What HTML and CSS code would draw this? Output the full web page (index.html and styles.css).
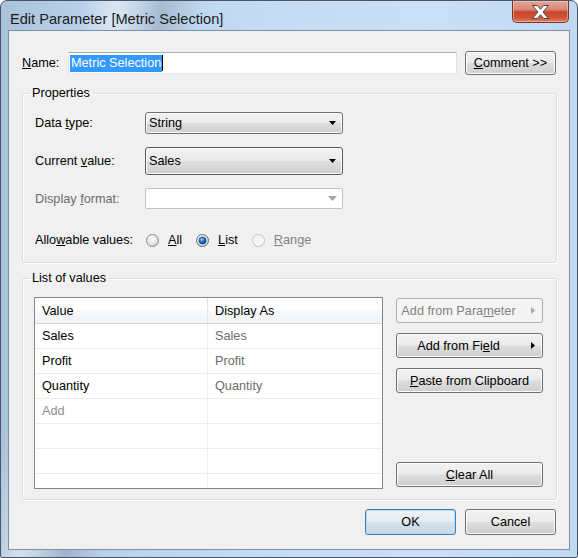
FILE: index.html
```html
<!DOCTYPE html>
<html>
<head>
<meta charset="utf-8">
<title>Edit Parameter</title>
<link rel="stylesheet" href="styles.css">
</head>
<body>
<div class="window">
  <div class="titlebar">
    <span class="title">Edit Parameter [Metric Selection]</span>
    <div class="close">
      <svg width="19" height="14" viewBox="0 0 19 14"><polygon points="1.5,0.5 6.3,0.5 9.5,4.2 12.7,0.5 17.5,0.5 12,7 17.5,13.5 12.7,13.5 9.5,9.8 6.3,13.5 1.5,13.5 7,7" fill="#ffffff" stroke="#454545" stroke-width="1" stroke-linejoin="round"/></svg>
    </div>
  </div>
  <div class="client">
    <div class="name-row">
      <span class="name-lbl"><u>N</u>ame:</span>
      <div class="textbox"><span class="sel">Metric Selection</span><span class="caret"></span></div>
      <div class="btn comment"><u>C</u>omment &gt;&gt;</div>
    </div>

    <fieldset class="group props">
      <legend>Properties</legend>
      <div class="prop-grid">
        <span class="plbl">Data <u>t</u>ype:</span>
        <div class="combo"><span>String</span><svg class="dd" width="7" height="4" viewBox="0 0 7 4"><polygon points="0,0 7,0 3.5,4" fill="#000"/></svg></div>

        <span class="plbl">Current <u>v</u>alue:</span>
        <div class="combo focus"><span>Sales</span><svg class="dd" width="7" height="4" viewBox="0 0 7 4"><polygon points="0,0 7,0 3.5,4" fill="#000"/></svg></div>

        <span class="plbl disabled">Display <u>f</u>ormat:</span>
        <div class="combo edit"><span></span><svg class="dd" width="9" height="5" viewBox="0 0 9 5"><polygon points="0,0 9,0 4.5,5" fill="#a3a3a3"/></svg></div>

        <span class="plbl bottom">Allo<u>w</u>able values:</span>
        <div class="radios bottom">
          <span class="ritem">
            <svg class="radio" width="13" height="13" viewBox="0 0 13 13">
              <defs>
                <radialGradient id="rg1" cx="45%" cy="40%" r="60%"><stop offset="0" stop-color="#fbfbfb"/><stop offset="0.6" stop-color="#e8e8e8"/><stop offset="1" stop-color="#c9c9c9"/></radialGradient>
              </defs>
              <circle cx="6.5" cy="6.5" r="6" fill="url(#rg1)" stroke="#8f8f8f" stroke-width="1"/>
            </svg>
            <span><u>A</u>ll</span>
          </span>
          <span class="ritem">
            <svg class="radio" width="13" height="13" viewBox="0 0 13 13">
              <defs>
                <radialGradient id="rg2" cx="45%" cy="40%" r="60%"><stop offset="0" stop-color="#fbfbfb"/><stop offset="0.6" stop-color="#e8e8e8"/><stop offset="1" stop-color="#c9c9c9"/></radialGradient>
                <radialGradient id="rd" cx="40%" cy="35%" r="65%"><stop offset="0" stop-color="#9fd3ff"/><stop offset="0.45" stop-color="#2a7fd6"/><stop offset="1" stop-color="#0b3a78"/></radialGradient>
              </defs>
              <circle cx="6.5" cy="6.5" r="6" fill="url(#rg2)" stroke="#5c6f86" stroke-width="1"/>
              <circle cx="6.5" cy="6.5" r="3.6" fill="url(#rd)" stroke="#123a66" stroke-width="0.6"/>
            </svg>
            <span><u>L</u>ist</span>
          </span>
          <span class="ritem disabled">
            <svg class="radio" width="13" height="13" viewBox="0 0 13 13">
              <circle cx="6.5" cy="6.5" r="6" fill="#f4f4f4" stroke="#c2c2c2" stroke-width="1"/>
            </svg>
            <span><u>R</u>ange</span>
          </span>
        </div>
      </div>
    </fieldset>

    <fieldset class="group list">
      <legend>List of values</legend>
      <div class="list-body">
        <div class="lv">
          <div class="lv-row lv-head"><div class="c1">Value</div><div class="c2">Display As</div></div>
          <div class="lv-row"><div class="c1">Sales</div><div class="c2 dim">Sales</div></div>
          <div class="lv-row"><div class="c1">Profit</div><div class="c2 dim">Profit</div></div>
          <div class="lv-row"><div class="c1">Quantity</div><div class="c2 dim">Quantity</div></div>
          <div class="lv-row"><div class="c1 add">Add</div><div class="c2"></div></div>
          <div class="lv-row"><div class="c1"></div><div class="c2"></div></div>
          <div class="lv-row"><div class="c1"></div><div class="c2"></div></div>
          <div class="lv-row"><div class="c1"></div><div class="c2"></div></div>
        </div>
        <div class="side">
          <div class="btn side-btn disabled"><span class="btxt">Add from Para<u>m</u>eter</span><span class="sub"><svg width="4" height="7" viewBox="0 0 4 7"><polygon points="0,0 4,3.5 0,7" fill="#a8a8a8"/></svg></span></div>
          <div class="btn side-btn"><span class="btxt">Add from Fi<u>e</u>ld</span><span class="sub"><svg width="4" height="7" viewBox="0 0 4 7"><polygon points="0,0 4,3.5 0,7" fill="#000"/></svg></span></div>
          <div class="btn side-btn"><span class="btxt full"><u>P</u>aste from Clipboard</span></div>
          <div class="btn side-btn clear"><span class="btxt full"><u>C</u>lear All</span></div>
        </div>
      </div>
    </fieldset>

    <div class="footer">
      <div class="btn dlg default">OK</div>
      <div class="btn dlg">Cancel</div>
    </div>
  </div>
</div>
</body>
</html>
```

FILE: styles.css
```css
html, body {
  margin: 0;
  padding: 0;
  background: #ffffff;
}

body {
  font-family: "Liberation Sans", Arial, sans-serif;
  font-size: 12.7px;
  color: #000;
}

.window {
  width: 578px;
  height: 558px;
  box-sizing: border-box;
  border: 1px solid #4a5666;
  border-radius: 7px 7px 2px 2px;
  padding: 0 7px 7px 7px;
  display: flex;
  flex-direction: column;
  background:
    linear-gradient(100deg, rgba(255,255,255,0) 12%, rgba(255,255,255,0.45) 17%, rgba(255,255,255,0) 24%),
    linear-gradient(100deg, rgba(80,95,110,0) 18%, rgba(80,95,110,0.22) 24%, rgba(80,95,110,0) 30%),
    linear-gradient(to right, #abc3da 0%, #b8d0e9 15%, #c4dcf3 45%, #c9e0f6 75%, #c0d9f2 100%);
  overflow: hidden;
}

.titlebar {
  height: 29px;
  display: flex;
  align-items: flex-start;
  flex-shrink: 0;
}

.title {
  font-size: 14.6px;
  line-height: 16px;
  margin-top: 10px;
  margin-left: 2px;
  color: #1b1b1b;
  white-space: nowrap;
}

.close {
  margin-left: auto;
  margin-right: 1px;
  width: 57px;
  height: 22px;
  box-sizing: border-box;
  border: 1px solid #7b3426;
  border-top: none;
  border-radius: 0 0 5px 5px;
  background: linear-gradient(#e4a496 0%, #d98a78 40%, #c9452c 52%, #cf5437 80%, #e0846a 100%);
  box-shadow: inset 0 0 0 1px rgba(255, 220, 210, 0.45);
  display: flex;
  align-items: center;
  justify-content: center;
  padding-top: 1px;
}

.client {
  height: 520px;
  box-sizing: border-box;
  border: 1px solid #7f8fa1;
  background: #f0f0f0;
  padding: 20px 12px 0 13px;
  display: flex;
  flex-direction: column;
}

/* Name row */
.name-row {
  display: flex;
  align-items: center;
  height: 24px;
  padding-right: 1px;
}

.name-lbl {
  width: 46px;
  flex-shrink: 0;
}

.textbox {
  flex: 1;
  height: 22px;
  box-sizing: border-box;
  border: 1px solid;
  border-color: #abadb3 #dbdfe6 #e3e9ef #e2e3ea;
  background: #ffffff;
  padding-left: 1px;
  display: flex;
  align-items: center;
}

.sel {
  background: #3399ff;
  color: #ffffff;
  height: 17px;
  line-height: 17px;
  padding: 0 1px 0 1px;
}

.caret {
  width: 1px;
  height: 16px;
  background: #000;
}

/* Buttons */
.btn {
  box-sizing: border-box;
  border: 1px solid #707070;
  border-radius: 3px;
  background: linear-gradient(#f2f2f2 0%, #ebebeb 48%, #dddddd 52%, #cfcfcf 100%);
  box-shadow: inset 0 0 0 1px #fbfbfb;
  display: flex;
  align-items: center;
  justify-content: center;
  color: #000;
  white-space: nowrap;
}

.btn.disabled {
  border-color: #adb2b5;
  background: #f4f4f4;
  box-shadow: none;
  color: #838383;
}

.comment {
  width: 91px;
  height: 24px;
  margin-left: 8px;
  flex-shrink: 0;
}

/* Group boxes */
.group {
  margin: 0;
  padding: 0;
  border: 1px solid #d5dfe5;
  border-radius: 3px;
  box-shadow: 1px 1px 0 #ffffff, inset 1px 1px 0 #ffffff;
  min-width: 0;
}

.group legend {
  margin-left: 7px;
  padding: 0 2px;
  font-size: 12.7px;
  line-height: 14px;
  color: #000;
}

.props {
  margin-top: 11px;
}

.prop-grid {
  display: grid;
  grid-template-columns: 110px 198px;
  grid-template-rows: 22px 28px 21px 26px;
  row-gap: 13px;
  align-items: center;
  padding: 12px 12px 14px 12px;
}

.plbl.disabled {
  color: #6d6d6d;
}

.bottom {
  align-self: end;
  height: 16px;
  display: flex;
  align-items: center;
}

.combo {
  height: 100%;
  box-sizing: border-box;
  border: 1px solid #707070;
  border-radius: 3px;
  background: linear-gradient(#f2f2f2 0%, #ebebeb 48%, #dddddd 52%, #cfcfcf 100%);
  box-shadow: inset 0 0 0 1px #fbfbfb;
  display: flex;
  align-items: center;
  justify-content: space-between;
  padding-left: 3px;
}

.combo.focus {
  border-color: #5a5a5a;
}

.combo .dd {
  margin-right: 6px;
}

.combo.edit {
  background: #ffffff;
  border-color: #c0c3c6;
  border-radius: 2px;
  box-shadow: none;
}

.combo.edit .dd {
  margin-right: 5px;
}

.radios {
  display: flex;
  align-items: center;
}

.ritem {
  display: flex;
  align-items: center;
  margin-right: 13px;
}

.ritem .radio {
  margin-left: 1px;
  margin-right: 9px;
}

.ritem.disabled {
  color: #838383;
}

/* List of values */
.list {
  margin-top: 8px;
}

.list-body {
  display: flex;
  padding: 12px 13px 10px 11px;
}

.lv {
  width: 349px;
  height: 192px;
  box-sizing: border-box;
  border: 1px solid #828790;
  background: #ffffff;
  overflow: hidden;
  display: flex;
  flex-direction: column;
  flex-shrink: 0;
}

.lv-row {
  display: grid;
  grid-template-columns: 173px 1fr;
  height: 25px;
  flex-shrink: 0;
}

.lv-row > div {
  box-sizing: border-box;
  border-bottom: 1px solid #ededed;
  padding-left: 7px;
  display: flex;
  align-items: center;
}

.lv-row > .c1 {
  border-right: 1px solid #ededed;
}

.lv-head {
  height: 26px;
}

.lv-head > div {
  background: linear-gradient(#ffffff 0%, #ffffff 45%, #f7f8fa 55%, #f1f2f4 100%);
  border-bottom: 1px solid #d5d5d5;
  color: #000;
}

.lv-head > .c1 {
  border-right: 1px solid #e1e5ea;
}

.dim {
  color: #6d6d6d;
}

.add {
  color: #8e8e8e;
}

.side {
  margin-left: 13px;
  width: 147px;
  display: flex;
  flex-direction: column;
  gap: 10px;
  padding: 1px 0 2px 0;
}

.side-btn {
  height: 25px;
  flex-shrink: 0;
  padding: 0;
}

.btxt {
  flex: 1;
  text-align: center;
}

.sub {
  width: 22px;
  display: flex;
  align-items: center;
  padding-left: 11px;
  box-sizing: border-box;
}

.clear {
  margin-top: auto;
}

/* Footer */
.footer {
  display: flex;
  justify-content: flex-end;
  gap: 9px;
  margin-top: 9px;
  padding-right: 1px;
}

.dlg {
  width: 91px;
  height: 26px;
}

.default {
  border-color: #3c7fb1;
  background: linear-gradient(#eef3f8 0%, #e4ebf2 48%, #d5e1eb 52%, #c8d7e4 100%);
  box-shadow: inset 0 0 0 1px #b9dcf3;
}
```
